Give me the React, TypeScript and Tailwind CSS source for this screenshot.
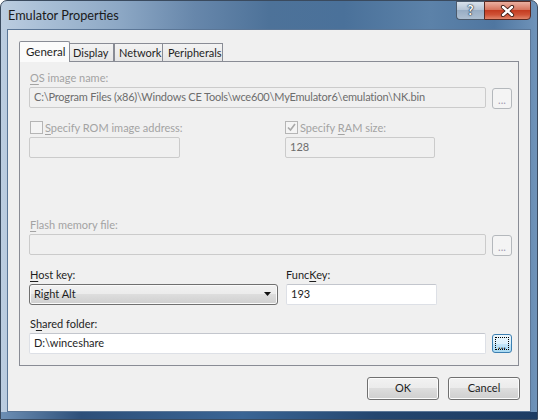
import React from 'react';

function Field({ value, disabled, className = '' }: { value?: string; disabled?: boolean; className?: string }) {
  return (
    <div
      className={`h-[21px] border rounded-[2px] flex items-center pl-[4px] whitespace-nowrap overflow-hidden ${
        disabled
          ? 'border-[#cbcbcb] bg-[#f0f0f0] text-[#6d6d6d]'
          : 'border-[#dde0e6] border-t-[#c3c6cd] bg-white text-[#1e1e1e]'
      } ${className}`}
    >
      {value}
    </div>
  );
}

function DotsButton({ focused }: { focused?: boolean }) {
  if (focused) {
    return (
      <div className="w-[20px] h-[19px] mt-px rounded-[3px] border border-[#3c7fb1] bg-[linear-gradient(#ecf7fd,#dbf0fc_50%,#c4e6fa_50%,#a9d9f2)] p-[2px]">
        <div className="w-full h-full border border-dotted border-black flex items-end justify-center text-[11px] leading-[9px] text-black">
          ...
        </div>
      </div>
    );
  }
  return (
    <div className="w-[20px] h-[21px] mt-[1px] rounded-[3px] border border-[#b4b8bc] bg-[#f4f4f4] flex items-end justify-center pb-[4px] text-[11px] leading-[8px] text-[#a39ab0]">
      ...
    </div>
  );
}

function Check({ checked }: { checked?: boolean }) {
  return (
    <div className="w-[13px] h-[13px] border border-[#b5b5b5] bg-[#f4f4f4] flex items-center justify-center">
      {checked && (
        <svg width="11" height="11" viewBox="0 0 11 11">
          <path d="M2 5.5 L4.5 8 L9 2" fill="none" stroke="#a8a8a8" strokeWidth="1.6" />
        </svg>
      )}
    </div>
  );
}

export default function App() {
  const label = 'h-[15px] leading-[15px] whitespace-nowrap';
  const u = 'underline underline-offset-[2px] decoration-1';
  const tab = 'h-[18px] mb-px border border-b-0 border-[#898c95] bg-[linear-gradient(#f3f3f3,#e6e6e6)] leading-[18px] whitespace-nowrap';
  const btn =
    'w-[72px] h-[23px] rounded-[3px] border border-[#707070] bg-[linear-gradient(#f2f2f2,#ebebeb_50%,#dddddd_50%,#cfcfcf)] shadow-[inset_0_0_0_1px_#fcfcfc] flex items-center justify-center text-[#1e1e1e]';

  return (
    <div className="w-[538px] h-[420px] flex flex-col overflow-hidden rounded-t-[7px] border border-[#3a4a5e] bg-[linear-gradient(to_right,#bccde0_0%,#a9bfd6_8%,#8da8c5_22%,#6787ab_36%,#4d7299_50%,#4a719a_64%,#5c82a9_80%,#4f76a0_92%,#6f93b9_100%)] font-['Lato',sans-serif] text-[11px] text-[#1e1e1e]">
      {/* title bar */}
      <div className="h-[28px] flex justify-between">
        <div className="pl-[7px] pt-[5px] text-[12.7px] leading-[18px] text-[#1a1a1a]">Emulator Properties</div>
        <div className="flex items-start pr-[6px]">
          <div className="w-[28px] h-[19px] border border-[#4b5a6c] border-r-0 rounded-bl-[4px] bg-[linear-gradient(#d9e2ec,#b6c5d6_45%,#98adc4_50%,#aebfd1)] flex items-center justify-center text-white font-bold text-[13px] leading-none [text-shadow:0_0_1px_#1b2b3c,0_0_1px_#1b2b3c,0_0_2px_#1b2b3c]">
            ?
          </div>
          <div className="w-[47px] h-[19px] border border-[#5a2a22] rounded-br-[4px] bg-[linear-gradient(#eab0a1,#d6765f_45%,#c43c21_50%,#cf5236_75%,#e0856a)] flex items-center justify-center">
            <svg width="15" height="12" viewBox="0 0 15 12">
              <path d="M3 2 L12 10 M12 2 L3 10" stroke="#3b1a14" strokeWidth="4.2" strokeLinecap="round" />
              <path d="M3 2 L12 10 M12 2 L3 10" stroke="#ffffff" strokeWidth="2.4" strokeLinecap="round" />
            </svg>
          </div>
        </div>
      </div>

      {/* client area */}
      <div className="flex-1 mx-[6px] border border-[#5b7696] bg-[#f0f0f0] flex flex-col">
        {/* tabs */}
        <div className="ml-[11px] mt-[11px] h-[21px] -mb-px flex items-end relative z-10">
          <div className="w-[51px] h-[21px] border border-b-0 border-[#898c95] bg-[#fbfbfb] pl-[6px] pt-[1px] text-[11.5px] leading-[17px] rounded-t-[2px]">
            General
          </div>
          <div className={`${tab} w-[44px] border-l-0 pl-[3px]`}>Display</div>
          <div className={`${tab} w-[49px] pl-[4px]`}>Network</div>
          <div className={`${tab} w-[60px] border-l-0 pl-[5px]`}>Peripherals</div>
        </div>

        {/* panel */}
        <div className="ml-[11px] w-[500px] h-[305px] border border-[#898c95] bg-[#f0f0f0] pl-[9px] pr-[5px] flex flex-col">
          <div className={`${label} mt-[8px] pl-px text-[#a3a3a3]`}>
            <span className={u}>O</span>S image name:
          </div>
          <div className="mt-[2px] flex gap-[6px]">
            <Field
              disabled
              className="w-[457px] tracking-[-0.2px]"
              value="C:\Program Files (x86)\Windows CE Tools\wce600\MyEmulator6\emulation\NK.bin"
            />
            <DotsButton />
          </div>

          <div className="mt-[11px] grid grid-cols-[256px_1fr] text-[#a3a3a3]">
            <div className="flex items-center gap-[2px] pl-px h-[15px]">
              <Check />
              <span className={label}>
                <span className={u}>S</span>pecify ROM image address:
              </span>
            </div>
            <div className="flex items-center gap-[2px] h-[15px]">
              <Check checked />
              <span className={label}>
                Specify <span className={u}>R</span>AM size:
              </span>
            </div>
          </div>
          <div className="mt-[2px] grid grid-cols-[256px_1fr]">
            <Field disabled className="w-[151px]" />
            <Field disabled className="w-[150px]" value="128" />
          </div>

          <div className={`${label} mt-[59px] pl-px text-[#a3a3a3]`}>
            <span className={u}>F</span>lash memory file:
          </div>
          <div className="mt-[2px] flex gap-[6px]">
            <Field disabled className="w-[457px]" />
            <DotsButton />
          </div>

          <div className="mt-[11px] grid grid-cols-[257px_1fr]">
            <div className={`${label} pl-px`}>
              <span className={u}>H</span>ost key:
            </div>
            <div className={label}>
              Func<span className={u}>K</span>ey:
            </div>
          </div>
          <div className="mt-[2px] grid grid-cols-[257px_1fr]">
            <div className="w-[249px] h-[21px] rounded-[3px] border border-[#707070] bg-[linear-gradient(#f2f2f2,#ebebeb_50%,#dddddd_50%,#cfcfcf)] shadow-[inset_0_0_0_1px_#fafafa] flex items-center justify-between pl-[4px] pr-[5px]">
              <span>Right Alt</span>
              <svg width="8" height="5" viewBox="0 0 8 5">
                <path d="M0 0 H7 L3.5 4 Z" fill="#111" />
              </svg>
            </div>
            <Field className="w-[151px]" value="193" />
          </div>

          <div className={`${label} mt-[11px] pl-px`}>
            S<span className={u}>h</span>ared folder:
          </div>
          <div className="mt-[2px] flex gap-[6px]">
            <Field className="w-[457px] h-[20px]" value="D:\winceshare" />
            <DotsButton focused />
          </div>
        </div>

        {/* buttons */}
        <div className="mt-[11px] mr-[10px] flex justify-end gap-[9px]">
          <div className={btn}>OK</div>
          <div className={btn}>Cancel</div>
        </div>
      </div>

      {/* bottom frame */}
      <div className="h-[7px] bg-[linear-gradient(to_right,#6d8fb4,#2d4f79_15%,#3a6595_45%,#24466f_70%,#1d3c63)]" />
    </div>
  );
}
